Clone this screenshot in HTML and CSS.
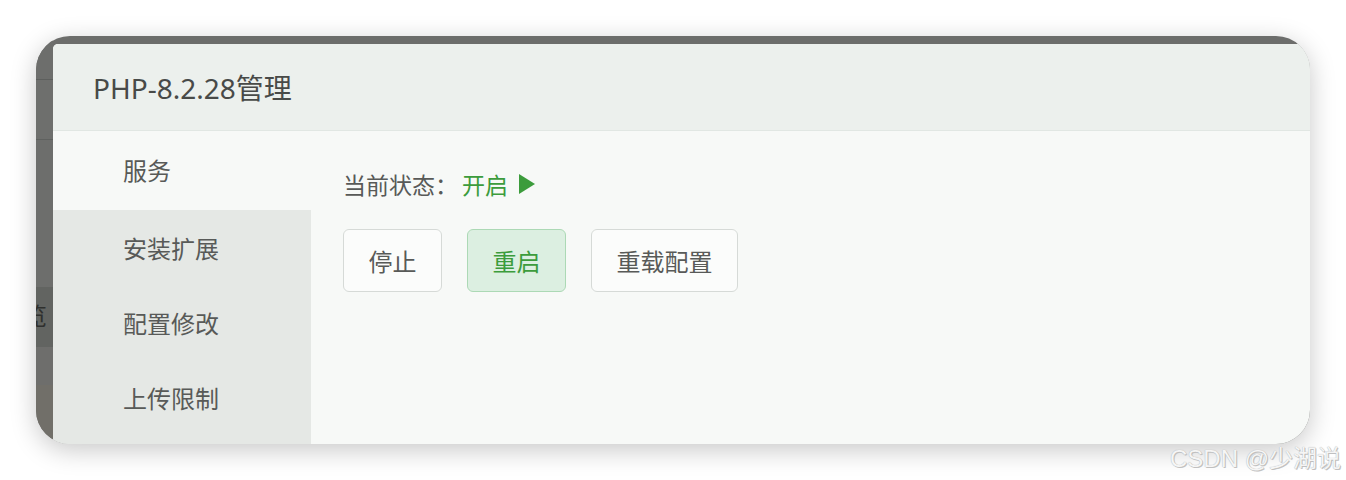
FILE: index.html
```html
<!DOCTYPE html>
<html lang="zh-CN">
<head>
<meta charset="utf-8">
<title>PHP-8.2.28管理</title>
<link rel="stylesheet" href="styles.css">
</head>
<body>
<div class="stage">
  <div class="card">
    <div class="strip">
      <div class="seg seg-a"></div>
      <div class="seg seg-b"></div>
      <div class="seg seg-c"></div>
      <div class="seg seg-d"><span class="peek">览</span></div>
      <div class="seg seg-e"></div>
      <div class="seg seg-f"></div>
    </div>
    <div class="modal">
      <div class="modal-header">PHP-8.2.28管理</div>
      <div class="modal-body">
        <nav class="side">
          <div class="side-item active">服务</div>
          <div class="side-item">安装扩展</div>
          <div class="side-item">配置修改</div>
          <div class="side-item">上传限制</div>
        </nav>
        <main class="content">
          <div class="status">
            <span class="status-label">当前状态：</span>
            <span class="status-on">开启</span>
            <svg class="play" width="18" height="20" viewBox="0 0 18 20"><polygon points="1,0 17,10 1,20" fill="#3c9c3c"/></svg>
          </div>
          <div class="actions">
            <button class="btn">停止</button>
            <button class="btn btn-green">重启</button>
            <button class="btn">重载配置</button>
          </div>
        </main>
      </div>
    </div>
  </div>
  <div class="watermark">CSDN @少湖说</div>
</div>
</body>
</html>
```
FILE: styles.css
```css
html, body {
  margin: 0;
  padding: 0;
  background: #ffffff;
}
body {
  width: 1346px;
  height: 480px;
  overflow: hidden;
  font-family: "Noto Sans", "Noto Sans CJK SC", sans-serif;
}
.stage {
  position: relative;
  width: 1346px;
  height: 480px;
  padding: 36px 0 0 36px;
  box-sizing: border-box;
}
.card {
  width: 1274px;
  height: 408px;
  border-radius: 34px;
  overflow: hidden;
  background: #6c6d6b;
  display: flex;
  padding-top: 8px;
  box-sizing: border-box;
  box-shadow: 0 6px 26px rgba(0, 0, 0, 0.22);
}
.strip {
  width: 17px;
  margin-top: -8px;
  display: flex;
  flex-direction: column;
  flex: none;
}
.seg { flex: none; overflow: hidden; }
.seg-a { height: 43px; background: #6d6e6c; border-bottom: 1px solid #5d5f5d; }
.seg-b { height: 59px; background: #6e6f6d; border-bottom: 1px solid #5f615f; }
.seg-c { height: 147px; background: #6d6e6c; }
.seg-d { height: 60px; background: #626461; position: relative; }
.seg-e { height: 38px; background: #6e6e6c; }
.seg-f { flex: 1; background: #716f69; }
.peek {
  display: block;
  margin-left: -13px;
  margin-top: 14px;
  font-size: 24px;
  line-height: 30px;
  color: #2f302e;
}
.modal {
  flex: 1;
  display: flex;
  flex-direction: column;
  border-top-left-radius: 5px;
  overflow: hidden;
  background: #f7f9f7;
}
.modal-header {
  height: 86px;
  flex: none;
  background: #ecf0ed;
  border-bottom: 1px solid #e1e7e3;
  display: flex;
  align-items: center;
  padding-left: 40px;
  font-size: 28px;
  color: #484a48;
}
.modal-body {
  flex: 1;
  display: flex;
}
.side {
  width: 258px;
  flex: none;
  background: #e5e8e5;
  display: flex;
  flex-direction: column;
}
.side-item {
  height: 75px;
  display: flex;
  align-items: center;
  padding-left: 70px;
  font-size: 24px;
  color: #585a58;
}
.side-item.active {
  height: 79px;
  padding-bottom: 3px;
  box-sizing: border-box;
  background: #f7f9f7;
}
.content {
  flex: 1;
  padding: 37px 0 0 32px;
  display: flex;
  flex-direction: column;
  gap: 29px;
}
.status {
  display: flex;
  align-items: center;
  height: 32px;
  font-size: 23px;
}
.status-label { color: #585a58; }
.status-on { color: #3c9c3c; margin-left: 4px; }
.play { margin-left: 10px; }
.actions {
  display: flex;
  gap: 25px;
}
.btn {
  height: 63px;
  padding: 0 24.5px;
  border: 1.5px solid #d6dad7;
  border-radius: 6px;
  background: #fbfcfb;
  font-family: "Noto Sans", "Noto Sans CJK SC", sans-serif;
  font-size: 24px;
  color: #585a58;
}
.btn-green {
  background: #dcefe1;
  border-color: #acd9b5;
  color: #3c9c3c;
}
.watermark {
  position: absolute;
  left: 1170px;
  top: 442px;
  font-family: "Liberation Sans", "Noto Sans CJK SC", sans-serif;
  font-size: 24px;
  line-height: 34px;
  color: #f5f5f5;
  text-shadow: 0 0 1px #a0a0a0, 1px 1px 0 #c4c4c4;
  white-space: nowrap;
}
```
